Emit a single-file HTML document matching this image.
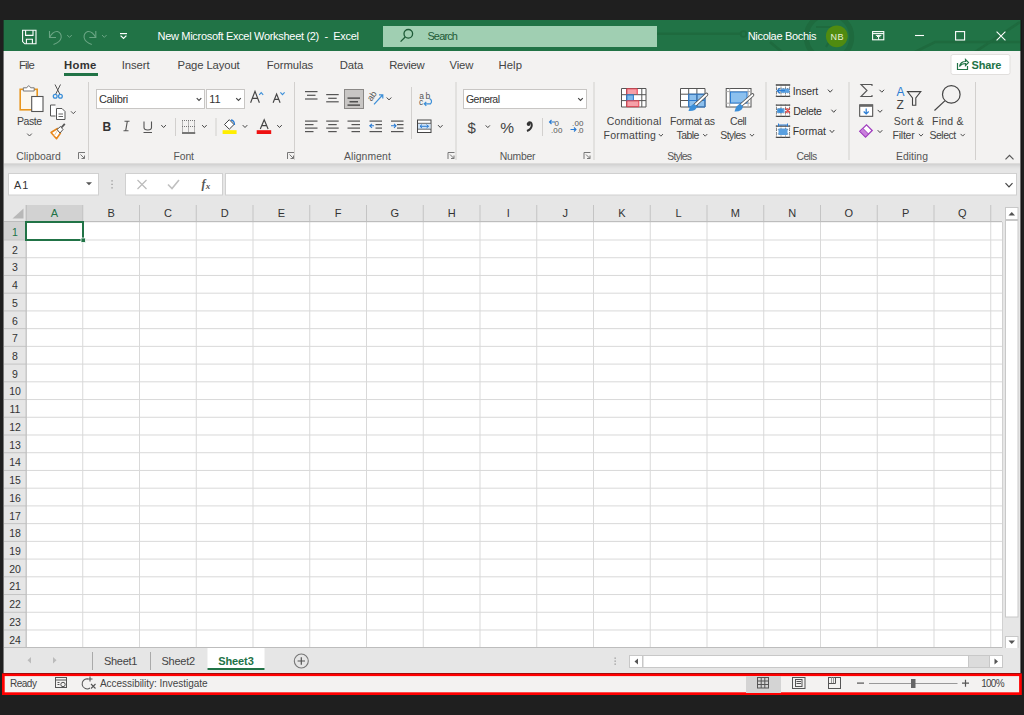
<!DOCTYPE html>
<html><head><meta charset="utf-8">
<style>
*{box-sizing:border-box;margin:0;padding:0}
html,body{width:1024px;height:715px;overflow:hidden;background:#1f1f1f;font-family:"Liberation Sans",sans-serif;position:relative}
svg{position:absolute;left:0;top:0}
.t{position:absolute;white-space:nowrap;line-height:1}
</style></head><body>
<svg width="1024" height="715" viewBox="0 0 1024 715">
<rect x="0" y="0" width="1024" height="715" fill="#1f1f1f" />
<rect x="4" y="20" width="1016" height="31" fill="#217346" />
<rect x="4" y="51" width="1016" height="112" fill="#f3f2f1" />
<rect x="4" y="163" width="1016" height="1" fill="#dddcdb" />
<rect x="4" y="164" width="1016" height="1" fill="#d3d3d3" />
<rect x="4" y="165" width="1016" height="1" fill="#d8d8d8" />
<rect x="4" y="166" width="1016" height="1" fill="#dddddd" />
<rect x="4" y="167" width="1016" height="1" fill="#e1e1e1" />
<rect x="4" y="168" width="1016" height="1" fill="#e4e4e4" />
<rect x="4" y="169" width="1016" height="36" fill="#e6e6e6" />
<rect x="4" y="205" width="1016" height="468" fill="#e6e6e6" />
<defs><clipPath id="tb"><rect x="4" y="20" width="1016" height="31"/></clipPath></defs><g stroke="#1e6a3e" stroke-width="2.6" fill="none" clip-path="url(#tb)"><path d="M657 33.8 H740.5"/><circle cx="743.5" cy="34" r="2.8" stroke-width="1.8"/><path d="M770 42 L782 52"/><circle cx="829" cy="37" r="22.7" stroke-width="5"/><path d="M816 27 H838 L826 47" stroke-width="2.2"/><path d="M915 52 L935 42 H1020"/><path d="M975 52 L1020 22"/></g>
<g stroke="#fff" stroke-width="1.1" fill="none"><path d="M22.6 30.3 H36 V43.8 H24.8 L22.6 41.6 Z"/><path d="M25.6 30.3 V35.4 H33 V30.3"/><path d="M26.4 43.8 V39.2 H32.4 V43.8"/></g>
<g stroke="#6aa584" stroke-width="1.1" fill="none"><path d="M49.5 31 V37.5 H56"/><path d="M49.5 37.5 Q53 31 57.5 31.5 Q61.5 33 61.2 37.5 Q60.5 42 53.5 44.5"/><path d="M95.8 31 V37.5 H89.3"/><path d="M95.8 37.5 Q92.3 31 87.8 31.5 Q83.8 33 84.1 37.5 Q84.8 42 91.8 44.5"/></g>
<path d="M67.2 35.0 L69.5 37.400000000000006 L71.8 35.0" stroke="#6aa584" stroke-width="1" fill="none"/>
<path d="M102.0 35.0 L104.3 37.400000000000006 L106.6 35.0" stroke="#6aa584" stroke-width="1" fill="none"/>
<g stroke="#fff" stroke-width="1.2" fill="none"><path d="M120 33.6 H127"/><path d="M120.6 35.6 L123.5 38.5 L126.4 35.6"/></g>
<rect x="383" y="26" width="274" height="21" fill="#a0cfb2" />
<g stroke="#1e5b37" stroke-width="1.3" fill="none"><circle cx="408.3" cy="33.8" r="4.3"/><path d="M405.2 37 L400.6 41.6"/></g>
<circle cx="836.8" cy="36.3" r="10.9" fill="#508b10"/>
<g stroke="#fff" stroke-width="1.1" fill="none"><rect x="872.6" y="31.6" width="11.2" height="8.2"/><path d="M872.6 33.6 H883.8"/><path d="M875.8 35.4 H881.4 M878.6 35.4 V39.8 M876.8 37.2 L878.6 35.4 L880.4 37.2" stroke-width="1"/></g>
<path d="M915 35.5 H924" stroke="#fff" stroke-width="1.1"/>
<rect x="955.6" y="31.6" width="9" height="8.4" stroke="#fff" stroke-width="1.1" fill="none"/>
<path d="M996.6 31.6 L1005.4 40.4 M1005.4 31.6 L996.6 40.4" stroke="#fff" stroke-width="1.1"/>
<rect x="64" y="73" width="34" height="3" fill="#217346" />
<rect x="951" y="54.5" width="59" height="20" rx="2" fill="#fff" stroke="#e1dfdd"/>
<g stroke="#217346" stroke-width="1.2" fill="none"><path d="M957.5 63 V69.5 H967.5 V66"/><path d="M959.5 66.5 Q960.5 61.5 965.5 61.5 V59.5 L968.5 62.5 L965.5 65.5 V63.5 Q961.5 63.5 959.5 66.5Z"/></g>
<rect x="88" y="82" width="1" height="78" fill="#d2d0ce" />
<rect x="294" y="82" width="1" height="78" fill="#d2d0ce" />
<rect x="455.5" y="82" width="1" height="78" fill="#d2d0ce" />
<rect x="593.5" y="82" width="1" height="78" fill="#d2d0ce" />
<rect x="765.5" y="82" width="1" height="78" fill="#d2d0ce" />
<rect x="848.5" y="82" width="1" height="78" fill="#d2d0ce" />
<rect x="975" y="82" width="1" height="78" fill="#d2d0ce" />
<rect x="175" y="118" width="1" height="18" fill="#d2d0ce" />
<rect x="215.5" y="118" width="1" height="18" fill="#d2d0ce" />
<rect x="411" y="87" width="1" height="52" fill="#d2d0ce" />
<rect x="542" y="118" width="1" height="18" fill="#d2d0ce" />
<g stroke="#777" stroke-width="1" fill="none"><path d="M78.5 159 V152.5 H85"/><path d="M80.5 154.5 L84.5 158.5 M84.5 155.5 V158.5 H81.5"/></g>
<g stroke="#777" stroke-width="1" fill="none"><path d="M287.5 159 V152.5 H294"/><path d="M289.5 154.5 L293.5 158.5 M293.5 155.5 V158.5 H290.5"/></g>
<g stroke="#777" stroke-width="1" fill="none"><path d="M448.0 159 V152.5 H454.5"/><path d="M450.0 154.5 L454.0 158.5 M454.0 155.5 V158.5 H451.0"/></g>
<g stroke="#777" stroke-width="1" fill="none"><path d="M584.0 159 V152.5 H590.5"/><path d="M586.0 154.5 L590.0 158.5 M590.0 155.5 V158.5 H587.0"/></g>
<path d="M1005.5 159.3 L1009.5 155.3 L1013.5 159.3" stroke="#555" stroke-width="1.2" fill="none"/>
<rect x="20.2" y="89.3" width="17" height="20.5" fill="#fbf7ee" stroke="#e8961e" stroke-width="1.6"/><path d="M23.3 91 V87.8 H26.8 Q28.7 83.8 30.6 87.8 H34.2 V91 Z" fill="#fff" stroke="#777" stroke-width="1"/><rect x="31.7" y="96.5" width="11.3" height="15" fill="#fff" stroke="#555" stroke-width="1.1"/>
<path d="M27.2 133.60000000000002 L29.5 136.0 L31.8 133.60000000000002" stroke="#555" stroke-width="1" fill="none"/>
<path d="M55 84.5 L60 94.5 M60.5 84.5 L55.5 94.5" stroke="#555" stroke-width="1" fill="none"/><circle cx="55.2" cy="96.2" r="1.9" fill="none" stroke="#3c8fd8" stroke-width="1.3"/><circle cx="60.4" cy="96.2" r="1.9" fill="none" stroke="#3c8fd8" stroke-width="1.3"/>
<g stroke="#555" stroke-width="1" fill="#fff"><path d="M55.5 105 H50.5 V116 H55.5"/><path d="M56.5 108.5 H62 L65 111.5 V119.5 H56.5Z"/><path d="M58.5 114 H63 M58.5 116.5 H63" stroke-width="0.9"/></g>
<path d="M71.0 111.3 L73.3 113.7 L75.6 111.3" stroke="#555" stroke-width="1" fill="none"/>
<path d="M51 132.5 L57.5 128.5 L60.5 133 L56.5 138.8 Z" fill="#fff" stroke="#e8861a" stroke-width="1.5" stroke-linejoin="round"/><path d="M54 136 L57.5 130.5" stroke="#f5c58a" stroke-width="1"/><path d="M57 129.5 L60.5 126.5 L63 129.5 L60 133Z" fill="#fff" stroke="#555" stroke-width="1"/><path d="M61.5 127.5 L64.8 123.8" stroke="#555" stroke-width="1.8"/>
<rect x="96.5" y="89.5" width="108" height="19" fill="#fff" stroke="#c8c6c4"/>
<path d="M196.7 98.1 L199 100.5 L201.3 98.1" stroke="#444" stroke-width="1.1" fill="none"/>
<rect x="206.5" y="89.5" width="38" height="19" fill="#fff" stroke="#c8c6c4"/>
<path d="M236.2 98.1 L238.5 100.5 L240.8 98.1" stroke="#444" stroke-width="1.1" fill="none"/>
<path d="M250.6 102.8 L255 91.4 L259.4 102.8 M252.3 98.4 H257.7" stroke="#444" stroke-width="1.15" fill="none"/>
<path d="M259.2 94.8 L261.2 92.6 L263.2 94.8" stroke="#3c8fd8" stroke-width="1.1" fill="none"/>
<path d="M273.1 102.8 L276.6 94 L280.1 102.8 M274.5 99.4 H278.7" stroke="#444" stroke-width="1.15" fill="none"/>
<path d="M280.4 92.3 L282.5 94.6 L284.6 92.3" stroke="#3c8fd8" stroke-width="1.1" fill="none"/>
<path d="M124.5 121.3 H129.5 M123.5 130.7 H128.5 M127.3 121.3 L125.7 130.7" stroke="#555" stroke-width="1.1" fill="none"/>
<path d="M144 121.5 V127.5 Q144 130 147.8 130 Q151.5 130 151.5 127.5 V121.5" stroke="#555" stroke-width="1.1" fill="none"/>
<rect x="143.5" y="132" width="8.5" height="1" fill="#555" />
<path d="M161.29999999999998 125.1 L163.6 127.5 L165.9 125.1" stroke="#444" stroke-width="1" fill="none"/>
<g stroke="#777" stroke-width="1" fill="none" stroke-dasharray="1 1"><path d="M182 120.5 H195 M182 126.5 H195 M182.5 120.5 V132 M188.5 120.5 V132 M194.5 120.5 V132"/></g><path d="M182 133 H195.2" stroke="#333" stroke-width="1.3"/>
<path d="M202.1 125.1 L204.4 127.5 L206.70000000000002 125.1" stroke="#444" stroke-width="1" fill="none"/>
<path d="M224.5 124.5 L229.3 119.7 L234 124.5 L229.3 129.2Z" fill="#fff" stroke="#444" stroke-width="1"/><path d="M231 120 Q234.5 120.5 234.5 125" stroke="#2b7cd3" stroke-width="1.3" fill="none"/>
<rect x="222.6" y="130.2" width="14" height="3.8" fill="#ffee00" />
<path d="M242.7 125.1 L245 127.5 L247.3 125.1" stroke="#444" stroke-width="1" fill="none"/>
<path d="M260.3 129 L264.2 119.8 L268.1 129 M261.8 125.6 H266.6" stroke="#444" stroke-width="1.15" fill="none"/>
<rect x="256.7" y="130.2" width="14.5" height="3.8" fill="#ee1111" />
<path d="M277.2 125.1 L279.5 127.5 L281.8 125.1" stroke="#444" stroke-width="1" fill="none"/>
<rect x="305" y="91" width="12.5" height="1.2" fill="#555" />
<rect x="307" y="94.7" width="8.5" height="1.2" fill="#555" />
<rect x="305" y="98.4" width="12.5" height="1.2" fill="#555" />
<rect x="326.2" y="94" width="12.5" height="1.2" fill="#555" />
<rect x="328.2" y="97.7" width="8.5" height="1.2" fill="#555" />
<rect x="326.2" y="101.2" width="12.5" height="1.2" fill="#555" />
<rect x="344.5" y="89.5" width="19" height="19" fill="#c8c6c4" stroke="#8a8886"/>
<rect x="347.5" y="97.5" width="12.5" height="1.2" fill="#333" />
<rect x="349.5" y="101.2" width="8.5" height="1.2" fill="#333" />
<rect x="347.5" y="104.5" width="12.5" height="1.2" fill="#333" />
<g><text x="0" y="0" font-size="9" fill="#555" font-family="Liberation Sans" transform="translate(371.5 101.8) rotate(-55)">ab</text><path d="M374 104.3 L382.6 95 M379 94.8 H382.8 V98.6" stroke="#3c8fd8" stroke-width="1.2" fill="none"/></g>
<path d="M386.7 97.5 L389 99.9 L391.3 97.5" stroke="#444" stroke-width="1" fill="none"/>
<path d="M429.5 98.5 Q433 100.5 430.5 103.8 H424.5 M426.3 101.8 L424.3 103.8 L426.3 105.8" stroke="#3c8fd8" stroke-width="1.2" fill="none"/>
<rect x="305" y="120.5" width="12.5" height="1.2" fill="#555" />
<rect x="305" y="124" width="8.5" height="1.2" fill="#555" />
<rect x="305" y="127.5" width="12.5" height="1.2" fill="#555" />
<rect x="305" y="131" width="8.5" height="1.2" fill="#555" />
<rect x="326.2" y="120.5" width="12.5" height="1.2" fill="#555" />
<rect x="328.2" y="124" width="8.5" height="1.2" fill="#555" />
<rect x="326.2" y="127.5" width="12.5" height="1.2" fill="#555" />
<rect x="328.2" y="131" width="8.5" height="1.2" fill="#555" />
<rect x="347.5" y="120.5" width="12.5" height="1.2" fill="#555" />
<rect x="351.5" y="124" width="8.5" height="1.2" fill="#555" />
<rect x="347.5" y="127.5" width="12.5" height="1.2" fill="#555" />
<rect x="351.5" y="131" width="8.5" height="1.2" fill="#555" />
<rect x="369.5" y="120.5" width="12.5" height="1.2" fill="#555" />
<rect x="375.5" y="124" width="6.5" height="1.2" fill="#555" />
<rect x="375.5" y="127.5" width="6.5" height="1.2" fill="#555" />
<rect x="369.5" y="131" width="12.5" height="1.2" fill="#555" />
<path d="M374 125.8 H369.8 M372 123.8 L369.8 125.8 L372 127.8" stroke="#2b7cd3" stroke-width="1.1" fill="none"/>
<rect x="391" y="120.5" width="12.5" height="1.2" fill="#555" />
<rect x="397" y="124" width="6.5" height="1.2" fill="#555" />
<rect x="397" y="127.5" width="6.5" height="1.2" fill="#555" />
<rect x="391" y="131" width="12.5" height="1.2" fill="#555" />
<path d="M391 125.8 H396 M394 123.8 L396 125.8 L394 127.8" stroke="#2b7cd3" stroke-width="1.1" fill="none"/>
<rect x="417.5" y="120" width="13.5" height="12.5" fill="#fff" stroke="#444" stroke-width="1"/><rect x="418" y="123.5" width="12.5" height="5.5" fill="#cfe3f7"/><path d="M417.5 123.3 H431 M417.5 129.2 H431" stroke="#444" stroke-width="0.8"/><path d="M420 126.3 H428.5 M422 124.6 L420 126.3 L422 128 M426.5 124.6 L428.5 126.3 L426.5 128" stroke="#2b7cd3" stroke-width="1" fill="none"/>
<path d="M438.0 125.1 L440.3 127.5 L442.6 125.1" stroke="#444" stroke-width="1" fill="none"/>
<rect x="463.5" y="89.5" width="123" height="19" fill="#fff" stroke="#c8c6c4"/>
<path d="M578.2 98.1 L580.5 100.5 L582.8 98.1" stroke="#444" stroke-width="1.1" fill="none"/>
<path d="M485.7 125.4 L487.8 127.6 L489.90000000000003 125.4" stroke="#444" stroke-width="1" fill="none"/>
<path d="M528.5 122.5 Q531.5 121.5 531.8 125 Q531.8 129 527 131" stroke="#333" stroke-width="2" fill="none"/><circle cx="528.6" cy="124" r="1.9" fill="#333"/>
<path d="M555 122 H549.5 M551.5 120 L549.5 122 L551.5 124" stroke="#2b7cd3" stroke-width="1.1" fill="none"/>
<path d="M570.5 129.5 H576 M574 127.5 L576 129.5 L574 131.5" stroke="#2b7cd3" stroke-width="1.1" fill="none"/>
<g><rect x="621.5" y="88.5" width="24.5" height="18.5" fill="#fff"/><rect x="627" y="89" width="10.5" height="5.5" fill="#f5a0a8"/><rect x="627" y="100.8" width="11.8" height="5.8" fill="#f5a0a8"/><rect x="627" y="94.8" width="6.5" height="5.6" fill="#7ab8ec"/><path d="M621.5 88.5 H646 V107 H621.5Z M621.5 94.7 H646 M621.5 100.6 H646 M626.6 88.5 V107 M641.8 88.5 V107" stroke="#555" stroke-width="1" fill="none"/><path d="M626.8 88.8 H637.2 V94.6 M626.8 88.8 V94.6" stroke="#e84050" stroke-width="1" fill="none"/><path d="M626.8 94.8 H633.4 V100.5 H626.8Z" stroke="#2b7cd3" stroke-width="1" fill="none"/><path d="M626.8 100.8 H638.8 V106.7 H626.8Z" stroke="#e84050" stroke-width="1" fill="none"/></g>
<path d="M658.8 134.0 L660.9 136.2 L663.0 134.0" stroke="#555" stroke-width="1" fill="none"/>
<g><rect x="680.5" y="88.5" width="24.5" height="18.5" fill="#fff"/><rect x="688.7" y="94.2" width="16.3" height="12.8" fill="#8cc0ee"/><path d="M680.5 88.5 H705 V107 H680.5Z M680.5 94.2 H705 M680.5 100.5 H705 M688.7 88.5 V107 M696.9 88.5 V107" stroke="#555" stroke-width="1" fill="none"/><path d="M688.7 94.2 H705 V107 H688.7Z M688.7 100.5 H705 M696.9 94.2 V107" stroke="#2b7cd3" stroke-width="1" fill="none"/><path d="M706.5 94.5 L694 106" stroke="#555" stroke-width="3.6" stroke-linecap="round"/><path d="M706.5 94.5 L694 106" stroke="#fff" stroke-width="1.8" stroke-linecap="round"/><path d="M694.5 104 Q690 104.5 688.5 111 Q696 111.5 697 106.5Z" fill="#3c8fd8"/></g>
<path d="M703.1 134.0 L705.2 136.2 L707.3000000000001 134.0" stroke="#555" stroke-width="1" fill="none"/>
<g><rect x="726.2" y="88.5" width="24.8" height="18.5" fill="#fff" stroke="#555" stroke-width="1"/><path d="M726.2 91.6 H751 M726.2 103.2 H751 M729.7 88.5 V107 M748.1 88.5 V107" stroke="#aaa" stroke-width="1"/><rect x="730.5" y="92" width="16.5" height="11" fill="#8cc0ee" stroke="#2b7cd3" stroke-width="1"/><path d="M752.5 95 L740 106" stroke="#555" stroke-width="3.6" stroke-linecap="round"/><path d="M752.5 95 L740 106" stroke="#fff" stroke-width="1.8" stroke-linecap="round"/><path d="M740.5 104 Q736 104.5 734.5 111.5 Q742 112 743 106.5Z" fill="#3c8fd8"/></g>
<path d="M749.9 134.0 L752 136.2 L754.1 134.0" stroke="#555" stroke-width="1" fill="none"/>
<rect x="776" y="84.4" width="14" height="12.5" fill="#fff"/>
<path d="M775.8 85.0 H790.2 M775.8 96.30000000000001 H790.2" stroke="#444" stroke-width="1.3"/>
<path d="M776.5 84.4 V96.9 M789.5 84.4 V96.9 M781 84.4 V96.9 M785.5 84.4 V96.9 M776 88.56666666666668 H790 M776 92.73333333333333 H790" stroke="#666" stroke-width="0.9" stroke-dasharray="1.2 1"/>
<rect x="781" y="88.6" width="8.5" height="4.2" fill="#5aa0e0" />
<path d="M785 90.7 H777.5 M780 88.2 L777.3 90.7 L780 93.2" stroke="#2b7cd3" stroke-width="1.3" fill="none"/>
<path d="M827.9000000000001 89.60000000000001 L830.2 92.2 L832.5 89.60000000000001" stroke="#444" stroke-width="1" fill="none"/>
<rect x="776" y="104.5" width="14" height="12.5" fill="#fff"/>
<path d="M775.8 105.1 H790.2 M775.8 116.4 H790.2" stroke="#444" stroke-width="1.3"/>
<path d="M776.5 104.5 V117.0 M789.5 104.5 V117.0 M781 104.5 V117.0 M785.5 104.5 V117.0 M776 108.66666666666667 H790 M776 112.83333333333333 H790" stroke="#666" stroke-width="0.9" stroke-dasharray="1.2 1"/>
<rect x="777" y="108.6" width="7.5" height="4.2" fill="#5aa0e0" />
<circle cx="780.5" cy="110.7" r="2.4" fill="#3c8fd8"/>
<path d="M785.5 108.2 L789.8 113.2 M789.8 108.2 L785.5 113.2" stroke="#e84040" stroke-width="1.3"/>
<path d="M831.4000000000001 109.7 L833.7 112.3 L836.0 109.7" stroke="#444" stroke-width="1" fill="none"/>
<rect x="776" y="125.5" width="14" height="12.5" fill="#fff"/>
<path d="M775.8 126.1 H790.2 M775.8 137.4 H790.2" stroke="#444" stroke-width="1.3"/>
<path d="M776.5 125.5 V138.0 M789.5 125.5 V138.0 M781 125.5 V138.0 M785.5 125.5 V138.0 M776 129.66666666666666 H790 M776 133.83333333333334 H790" stroke="#666" stroke-width="0.9" stroke-dasharray="1.2 1"/>
<rect x="778.5" y="128.5" width="9" height="6.5" fill="#5aa0e0" />
<path d="M778.5 125 H787.5 M778.5 123.5 V126.5 M787.5 123.5 V126.5" stroke="#2b7cd3" stroke-width="1"/>
<path d="M829.7 130.0 L832 132.60000000000002 L834.3 130.0" stroke="#444" stroke-width="1" fill="none"/>
<path d="M872 86 V84.5 H861 L867 90.5 L861 96.5 H872 V95" stroke="#555" stroke-width="1.1" fill="none"/>
<path d="M879.5 89.8 L881.8 92.2 L884.0999999999999 89.8" stroke="#444" stroke-width="1" fill="none"/>
<rect x="859.7" y="104.8" width="13" height="11.5" fill="#fff" stroke="#444" stroke-width="1"/><rect x="859.7" y="104.8" width="13" height="2" fill="#666"/><path d="M866.2 108.5 V114 M863.7 111.5 L866.2 114 L868.7 111.5" stroke="#2b7cd3" stroke-width="1.2" fill="none"/>
<path d="M877.7 109.89999999999999 L880 112.3 L882.3 109.89999999999999" stroke="#444" stroke-width="1" fill="none"/>
<path d="M859.8 131.3 L866.5 124.8 L872.2 130.5 L865.5 137Z" fill="#fff" stroke="#a13fbf" stroke-width="1.3"/><path d="M859.8 131.3 L862.8 128.3 L868.5 134 L865.5 137Z" fill="#c97fdc" stroke="#a13fbf" stroke-width="1"/>
<path d="M877.7 130.20000000000002 L880 132.6 L882.3 130.20000000000002" stroke="#444" stroke-width="1" fill="none"/>
<path d="M907.5 91.6 H920.8 L915.8 98 V105.3 H912.5 V98 Z" fill="none" stroke="#444" stroke-width="1.1"/>
<path d="M918.9 133.9 L921 136.1 L923.1 133.9" stroke="#555" stroke-width="1" fill="none"/>
<circle cx="951.3" cy="94.4" r="8.8" fill="none" stroke="#444" stroke-width="1.2"/><path d="M944.8 100.9 L934.5 110.5" stroke="#444" stroke-width="1.2"/>
<path d="M960.6 133.9 L962.7 136.1 L964.8000000000001 133.9" stroke="#555" stroke-width="1" fill="none"/>
<rect x="8.5" y="173.5" width="90" height="21.5" fill="#fff" stroke="#d0d0d0"/>
<path d="M86 182.3 H92 L89 185.3Z" fill="#555"/>
<rect x="111.4" y="180.2" width="1.3" height="1.3" fill="#999" />
<rect x="111.4" y="183.7" width="1.3" height="1.3" fill="#999" />
<rect x="111.4" y="187.2" width="1.3" height="1.3" fill="#999" />
<rect x="125.5" y="173.5" width="97" height="21.5" fill="#fff" stroke="#d0d0d0"/>
<path d="M137.5 180 L146.5 189 M146.5 180 L137.5 189" stroke="#bbb" stroke-width="1.2"/>
<path d="M168 184.5 L172 188.5 L179 180" stroke="#c0c0c0" stroke-width="1.6" fill="none"/>
<rect x="225.5" y="173.5" width="791" height="21.5" fill="#fff" stroke="#d0d0d0"/>
<path d="M1005.5 183.2 L1009 186.8 L1012.5 183.2" stroke="#444" stroke-width="1.2" fill="none"/>
<rect x="26" y="222" width="976" height="426" fill="#fff" />
<rect x="82.25" y="222" width="1" height="426" fill="#d9d9d9" />
<rect x="139.00" y="222" width="1" height="426" fill="#d9d9d9" />
<rect x="195.75" y="222" width="1" height="426" fill="#d9d9d9" />
<rect x="252.50" y="222" width="1" height="426" fill="#d9d9d9" />
<rect x="309.25" y="222" width="1" height="426" fill="#d9d9d9" />
<rect x="366.00" y="222" width="1" height="426" fill="#d9d9d9" />
<rect x="422.75" y="222" width="1" height="426" fill="#d9d9d9" />
<rect x="479.50" y="222" width="1" height="426" fill="#d9d9d9" />
<rect x="536.25" y="222" width="1" height="426" fill="#d9d9d9" />
<rect x="593.00" y="222" width="1" height="426" fill="#d9d9d9" />
<rect x="649.75" y="222" width="1" height="426" fill="#d9d9d9" />
<rect x="706.50" y="222" width="1" height="426" fill="#d9d9d9" />
<rect x="763.25" y="222" width="1" height="426" fill="#d9d9d9" />
<rect x="820.00" y="222" width="1" height="426" fill="#d9d9d9" />
<rect x="876.75" y="222" width="1" height="426" fill="#d9d9d9" />
<rect x="933.50" y="222" width="1" height="426" fill="#d9d9d9" />
<rect x="990.25" y="222" width="1" height="426" fill="#d9d9d9" />
<rect x="26" y="239.50" width="976" height="1" fill="#d9d9d9" />
<rect x="26" y="257.22" width="976" height="1" fill="#d9d9d9" />
<rect x="26" y="274.95" width="976" height="1" fill="#d9d9d9" />
<rect x="26" y="292.68" width="976" height="1" fill="#d9d9d9" />
<rect x="26" y="310.41" width="976" height="1" fill="#d9d9d9" />
<rect x="26" y="328.13" width="976" height="1" fill="#d9d9d9" />
<rect x="26" y="345.86" width="976" height="1" fill="#d9d9d9" />
<rect x="26" y="363.59" width="976" height="1" fill="#d9d9d9" />
<rect x="26" y="381.31" width="976" height="1" fill="#d9d9d9" />
<rect x="26" y="399.04" width="976" height="1" fill="#d9d9d9" />
<rect x="26" y="416.77" width="976" height="1" fill="#d9d9d9" />
<rect x="26" y="434.49" width="976" height="1" fill="#d9d9d9" />
<rect x="26" y="452.22" width="976" height="1" fill="#d9d9d9" />
<rect x="26" y="469.95" width="976" height="1" fill="#d9d9d9" />
<rect x="26" y="487.68" width="976" height="1" fill="#d9d9d9" />
<rect x="26" y="505.40" width="976" height="1" fill="#d9d9d9" />
<rect x="26" y="523.13" width="976" height="1" fill="#d9d9d9" />
<rect x="26" y="540.86" width="976" height="1" fill="#d9d9d9" />
<rect x="26" y="558.58" width="976" height="1" fill="#d9d9d9" />
<rect x="26" y="576.31" width="976" height="1" fill="#d9d9d9" />
<rect x="26" y="594.04" width="976" height="1" fill="#d9d9d9" />
<rect x="26" y="611.76" width="976" height="1" fill="#d9d9d9" />
<rect x="26" y="629.49" width="976" height="1" fill="#d9d9d9" />
<rect x="26" y="205" width="976" height="17" fill="#e6e6e6" />
<rect x="26" y="205" width="57" height="17" fill="#d2d2d2" />
<rect x="82.25" y="205" width="1" height="17" fill="#c4c4c4" />
<rect x="139.00" y="205" width="1" height="17" fill="#c4c4c4" />
<rect x="195.75" y="205" width="1" height="17" fill="#c4c4c4" />
<rect x="252.50" y="205" width="1" height="17" fill="#c4c4c4" />
<rect x="309.25" y="205" width="1" height="17" fill="#c4c4c4" />
<rect x="366.00" y="205" width="1" height="17" fill="#c4c4c4" />
<rect x="422.75" y="205" width="1" height="17" fill="#c4c4c4" />
<rect x="479.50" y="205" width="1" height="17" fill="#c4c4c4" />
<rect x="536.25" y="205" width="1" height="17" fill="#c4c4c4" />
<rect x="593.00" y="205" width="1" height="17" fill="#c4c4c4" />
<rect x="649.75" y="205" width="1" height="17" fill="#c4c4c4" />
<rect x="706.50" y="205" width="1" height="17" fill="#c4c4c4" />
<rect x="763.25" y="205" width="1" height="17" fill="#c4c4c4" />
<rect x="820.00" y="205" width="1" height="17" fill="#c4c4c4" />
<rect x="876.75" y="205" width="1" height="17" fill="#c4c4c4" />
<rect x="933.50" y="205" width="1" height="17" fill="#c4c4c4" />
<rect x="990.25" y="205" width="1" height="17" fill="#c4c4c4" />
<rect x="4" y="221" width="998" height="1.2" fill="#bdbdbd" />
<rect x="4" y="222" width="22" height="426" fill="#e6e6e6" />
<rect x="4" y="222" width="22" height="18" fill="#d2d2d2" />
<rect x="4" y="239.50" width="22" height="1" fill="#c4c4c4" />
<rect x="4" y="257.22" width="22" height="1" fill="#c4c4c4" />
<rect x="4" y="274.95" width="22" height="1" fill="#c4c4c4" />
<rect x="4" y="292.68" width="22" height="1" fill="#c4c4c4" />
<rect x="4" y="310.41" width="22" height="1" fill="#c4c4c4" />
<rect x="4" y="328.13" width="22" height="1" fill="#c4c4c4" />
<rect x="4" y="345.86" width="22" height="1" fill="#c4c4c4" />
<rect x="4" y="363.59" width="22" height="1" fill="#c4c4c4" />
<rect x="4" y="381.31" width="22" height="1" fill="#c4c4c4" />
<rect x="4" y="399.04" width="22" height="1" fill="#c4c4c4" />
<rect x="4" y="416.77" width="22" height="1" fill="#c4c4c4" />
<rect x="4" y="434.49" width="22" height="1" fill="#c4c4c4" />
<rect x="4" y="452.22" width="22" height="1" fill="#c4c4c4" />
<rect x="4" y="469.95" width="22" height="1" fill="#c4c4c4" />
<rect x="4" y="487.68" width="22" height="1" fill="#c4c4c4" />
<rect x="4" y="505.40" width="22" height="1" fill="#c4c4c4" />
<rect x="4" y="523.13" width="22" height="1" fill="#c4c4c4" />
<rect x="4" y="540.86" width="22" height="1" fill="#c4c4c4" />
<rect x="4" y="558.58" width="22" height="1" fill="#c4c4c4" />
<rect x="4" y="576.31" width="22" height="1" fill="#c4c4c4" />
<rect x="4" y="594.04" width="22" height="1" fill="#c4c4c4" />
<rect x="4" y="611.76" width="22" height="1" fill="#c4c4c4" />
<rect x="4" y="629.49" width="22" height="1" fill="#c4c4c4" />
<rect x="4" y="647.22" width="22" height="1" fill="#c4c4c4" />
<rect x="25.6" y="205" width="1.2" height="443" fill="#bdbdbd" />
<rect x="1002" y="222" width="1" height="426" fill="#bdbdbd" />
<rect x="4" y="647" width="998" height="1" fill="#bdbdbd" />
<path d="M12.5 218.5 H23.5 V208.5Z" fill="#b8b8b8"/>
<rect x="26" y="222" width="57" height="18" fill="none" stroke="#217346" stroke-width="2"/>
<rect x="81" y="238" width="4.5" height="4.5" fill="#217346" stroke="#fff" stroke-width="0.8"/>
<rect x="1002.5" y="205" width="17.5" height="443" fill="#e6e6e6" />
<rect x="1005.5" y="207.5" width="12.5" height="12" fill="#fff" stroke="#c8c8c8"/><path d="M1008.5 215.5 L1011.75 212 L1015 215.5Z" fill="#555"/>
<rect x="1005.5" y="220.5" width="12.5" height="396.5" fill="#fff" stroke="#c8c8c8"/>
<rect x="1005.5" y="636.5" width="12.5" height="12" fill="#fff" stroke="#c8c8c8"/><path d="M1008.5 640.5 L1011.75 644 L1015 640.5Z" fill="#555"/>
<rect x="4" y="648" width="1016" height="25" fill="#e6e6e6" />
<path d="M31 657 V663.5 L27.5 660.25Z" fill="#bbb"/><path d="M53 657 V663.5 L56.5 660.25Z" fill="#bbb"/>
<rect x="92" y="652" width="1" height="18" fill="#aaa" />
<rect x="150" y="652" width="1" height="18" fill="#aaa" />
<rect x="207.5" y="648" width="57" height="22" fill="#fff" />
<rect x="207.5" y="668" width="57" height="2" fill="#217346" />
<circle cx="301.3" cy="661" r="7" fill="none" stroke="#777" stroke-width="1.1"/><path d="M301.3 657.3 V664.7 M297.6 661 H305" stroke="#555" stroke-width="1.2"/>
<rect x="614.5" y="657.5" width="1.3" height="1.3" fill="#999" />
<rect x="614.5" y="660.5" width="1.3" height="1.3" fill="#999" />
<rect x="614.5" y="663.5" width="1.3" height="1.3" fill="#999" />
<rect x="629.5" y="655.5" width="373" height="12" fill="#dcdcdc" stroke="#c8c8c8"/>
<rect x="629.5" y="655.5" width="13" height="12" fill="#fff" stroke="#c8c8c8"/><path d="M638 658.5 V664.5 L634.5 661.5Z" fill="#555"/>
<rect x="643" y="655.5" width="325.5" height="12" fill="#fff" stroke="#c8c8c8"/>
<rect x="989.5" y="655.5" width="13" height="12" fill="#fff" stroke="#c8c8c8"/><path d="M994.5 658.5 V664.5 L998 661.5Z" fill="#555"/>
<rect x="3.35" y="674.75" width="1017.1" height="18.9" fill="#f3f2f1" stroke="#ff0000" stroke-width="2.7"/>
<g stroke="#555" stroke-width="1" fill="none"><rect x="55.5" y="677.5" width="11" height="10"/><path d="M55.5 680 H66.5"/><path d="M57.5 682.5 H59.5 M57.5 684.5 H59.5"/><circle cx="63" cy="684.5" r="2.2"/></g>
<g stroke="#555" stroke-width="1.1" fill="none"><path d="M88 679 A5 5 0 1 0 90 688"/><path d="M90 676.5 V681.5 M87.5 679 H92.5"/><path d="M91 684 L95.5 688.5 M95.5 684 L91 688.5"/></g>
<rect x="746" y="676" width="35" height="17" fill="#d4d4d4" />
<g stroke="#555" stroke-width="1" fill="none"><rect x="757.5" y="677.5" width="11" height="10.5"/><path d="M761.2 677.5 V688 M764.8 677.5 V688 M757.5 681 H768.5 M757.5 684.5 H768.5"/></g>
<g stroke="#555" stroke-width="1" fill="none"><rect x="792.5" y="677.5" width="12.5" height="11"/><rect x="795.5" y="679.5" width="6.5" height="7"/><path d="M796.5 681.5 H801 M796.5 683.5 H801"/></g>
<g stroke="#555" stroke-width="1" fill="none"><rect x="828.5" y="677.5" width="12" height="11"/><path d="M828.5 683.5 H835.5 V677.5"/><path d="M831.5 677.5 V683 M833.5 677.5 V683" stroke="#999"/></g>
<rect x="857" y="682.5" width="7" height="1.2" fill="#555" />
<rect x="869" y="683" width="88.5" height="1" fill="#999" />
<rect x="911" y="679" width="4.5" height="9" fill="#666" />
<path d="M962 683.2 H969 M965.5 679.7 V686.7" stroke="#555" stroke-width="1.2"/>
<rect x="3" y="20" width="1" height="31" fill="#1c3f2c" />
<rect x="3" y="51" width="1" height="622" fill="#7a7a7a" />
<rect x="1020" y="51" width="1" height="622" fill="#707070" />
<rect x="1020" y="20" width="1" height="31" fill="#1c3f2c" />
<rect x="1021" y="20" width="1" height="653" fill="#171717" />
</svg>
<div class="t" style="left:157.50px;top:31px;font-size:11px;color:#fff;font-weight:400;letter-spacing:-0.306px;white-space:pre">New Microsoft Excel Worksheet (2)  -  Excel</div>
<div class="t" style="left:427.40px;top:31px;font-size:11px;color:#1e5b37;font-weight:400;letter-spacing:-0.854px;">Search</div>
<div class="t" style="left:747.70px;top:31px;font-size:11px;color:#fff;font-weight:400;letter-spacing:-0.305px;">Nicolae Bochis</div>
<div class="t" style="left:830.50px;top:33px;font-size:9px;color:#e8f0d8;font-weight:400;letter-spacing:0.490px;">NB</div>
<div class="t" style="left:18.90px;top:60px;font-size:11.3px;color:#444;font-weight:400;letter-spacing:-0.731px;">File</div>
<div class="t" style="left:121.70px;top:60px;font-size:11.3px;color:#444;font-weight:400;letter-spacing:-0.070px;">Insert</div>
<div class="t" style="left:177.50px;top:60px;font-size:11.3px;color:#444;font-weight:400;letter-spacing:-0.125px;">Page Layout</div>
<div class="t" style="left:266.80px;top:60px;font-size:11.3px;color:#444;font-weight:400;letter-spacing:-0.089px;">Formulas</div>
<div class="t" style="left:339.80px;top:60px;font-size:11.3px;color:#444;font-weight:400;letter-spacing:-0.100px;">Data</div>
<div class="t" style="left:389.30px;top:60px;font-size:11.3px;color:#444;font-weight:400;letter-spacing:-0.353px;">Review</div>
<div class="t" style="left:449.50px;top:60px;font-size:11.3px;color:#444;font-weight:400;letter-spacing:-0.165px;">View</div>
<div class="t" style="left:498.40px;top:60px;font-size:11.3px;color:#444;font-weight:400;letter-spacing:0.126px;">Help</div>
<div class="t" style="left:64.00px;top:60px;font-size:11.3px;color:#333;font-weight:700;letter-spacing:0.295px;">Home</div>
<div class="t" style="left:971.60px;top:60px;font-size:11px;color:#217346;font-weight:700;letter-spacing:-0.170px;">Share</div>
<div class="t" style="left:16.30px;top:152px;font-size:10.4px;color:#555;font-weight:400;letter-spacing:-0.002px;">Clipboard</div>
<div class="t" style="left:173.50px;top:152px;font-size:10.4px;color:#555;font-weight:400;letter-spacing:-0.100px;">Font</div>
<div class="t" style="left:344.00px;top:152px;font-size:10.4px;color:#555;font-weight:400;letter-spacing:0.072px;">Alignment</div>
<div class="t" style="left:499.80px;top:152px;font-size:10.4px;color:#555;font-weight:400;letter-spacing:-0.234px;">Number</div>
<div class="t" style="left:667.30px;top:152px;font-size:10.4px;color:#555;font-weight:400;letter-spacing:-0.728px;">Styles</div>
<div class="t" style="left:796.60px;top:152px;font-size:10.4px;color:#555;font-weight:400;letter-spacing:-0.635px;">Cells</div>
<div class="t" style="left:896.00px;top:152px;font-size:10.4px;color:#555;font-weight:400;letter-spacing:0.029px;">Editing</div>
<div class="t" style="left:17.00px;top:116px;font-size:10.5px;color:#444;font-weight:400;letter-spacing:-0.457px;">Paste</div>
<div class="t" style="left:98.90px;top:94px;font-size:11px;color:#333;font-weight:400;letter-spacing:-0.297px;">Calibri</div>
<div class="t" style="left:209.3px;top:94.00px;font-size:11px;color:#333;font-weight:400;">11</div>
<div class="t" style="left:102.60px;top:121px;font-size:12px;color:#333;font-weight:700;letter-spacing:0.000px;">B</div>
<div class="t" style="left:419.30px;top:92px;font-size:8.5px;color:#555;font-weight:400;letter-spacing:1.565px;">ab</div>
<div class="t" style="left:419px;top:98.00px;font-size:8.5px;color:#555;font-weight:400;">c</div>
<div class="t" style="left:466.00px;top:94px;font-size:10.5px;color:#333;font-weight:400;letter-spacing:-0.563px;">General</div>
<div class="t" style="left:467.6px;top:120.00px;font-size:15px;color:#444;font-weight:400;">$</div>
<div class="t" style="left:500.2px;top:120.00px;font-size:15.5px;color:#444;font-weight:400;">%</div>
<div class="t" style="left:554.50px;top:120px;font-size:8px;color:#555;font-weight:400;letter-spacing:0.000px;">0</div>
<div class="t" style="left:551.00px;top:127px;font-size:8px;color:#555;font-weight:400;letter-spacing:0.140px;">.00</div>
<div class="t" style="left:572.00px;top:120px;font-size:8px;color:#555;font-weight:400;letter-spacing:0.190px;">.00</div>
<div class="t" style="left:577.50px;top:127px;font-size:8px;color:#555;font-weight:400;letter-spacing:-0.680px;">.0</div>
<div class="t" style="left:606.70px;top:116px;font-size:10.5px;color:#444;font-weight:400;letter-spacing:0.205px;">Conditional</div>
<div class="t" style="left:603.50px;top:130px;font-size:10.5px;color:#444;font-weight:400;letter-spacing:0.234px;">Formatting</div>
<div class="t" style="left:670.00px;top:116px;font-size:10.5px;color:#444;font-weight:400;letter-spacing:-0.269px;">Format as</div>
<div class="t" style="left:676.60px;top:130px;font-size:10.5px;color:#444;font-weight:400;letter-spacing:-0.599px;">Table</div>
<div class="t" style="left:730.10px;top:116px;font-size:10.5px;color:#444;font-weight:400;letter-spacing:-0.504px;">Cell</div>
<div class="t" style="left:720.20px;top:130px;font-size:10.5px;color:#444;font-weight:400;letter-spacing:-0.563px;">Styles</div>
<div class="t" style="left:792.70px;top:86px;font-size:10.5px;color:#333;font-weight:400;letter-spacing:-0.150px;">Insert</div>
<div class="t" style="left:793.20px;top:106px;font-size:10.5px;color:#333;font-weight:400;letter-spacing:-0.349px;">Delete</div>
<div class="t" style="left:792.70px;top:126px;font-size:10.5px;color:#333;font-weight:400;letter-spacing:-0.007px;">Format</div>
<div class="t" style="left:896.40px;top:86px;font-size:12px;color:#2b7cd3;font-weight:400;letter-spacing:0.000px;">A</div>
<div class="t" style="left:896.40px;top:99px;font-size:12px;color:#444;font-weight:400;letter-spacing:0.000px;">Z</div>
<div class="t" style="left:893.70px;top:116px;font-size:10.5px;color:#444;font-weight:400;letter-spacing:0.202px;">Sort &amp;</div>
<div class="t" style="left:892.50px;top:130px;font-size:10.5px;color:#444;font-weight:400;letter-spacing:-0.222px;">Filter</div>
<div class="t" style="left:932.00px;top:116px;font-size:10.5px;color:#444;font-weight:400;letter-spacing:0.251px;">Find &amp;</div>
<div class="t" style="left:929.40px;top:130px;font-size:10.5px;color:#444;font-weight:400;letter-spacing:-0.478px;">Select</div>
<div class="t" style="left:14.10px;top:180px;font-size:10.8px;color:#333;font-weight:400;letter-spacing:0.970px;">A1</div>
<div class="t" style="left:201.5px;top:178.00px;font-size:12px;color:#555;font-weight:700;font-style:italic;font-family:'Liberation Serif'">f</div>
<div class="t" style="left:205.8px;top:182.00px;font-size:9px;color:#555;font-weight:700;font-style:italic;font-family:'Liberation Serif'">x</div>
<div class="t" style="left:-45.625px;width:200px;text-align:center;top:208.00px;font-size:11px;color:#217346;font-weight:400;">A</div>
<div class="t" style="left:11.125px;width:200px;text-align:center;top:208.00px;font-size:11px;color:#333;font-weight:400;">B</div>
<div class="t" style="left:67.875px;width:200px;text-align:center;top:208.00px;font-size:11px;color:#333;font-weight:400;">C</div>
<div class="t" style="left:124.625px;width:200px;text-align:center;top:208.00px;font-size:11px;color:#333;font-weight:400;">D</div>
<div class="t" style="left:181.375px;width:200px;text-align:center;top:208.00px;font-size:11px;color:#333;font-weight:400;">E</div>
<div class="t" style="left:238.125px;width:200px;text-align:center;top:208.00px;font-size:11px;color:#333;font-weight:400;">F</div>
<div class="t" style="left:294.875px;width:200px;text-align:center;top:208.00px;font-size:11px;color:#333;font-weight:400;">G</div>
<div class="t" style="left:351.625px;width:200px;text-align:center;top:208.00px;font-size:11px;color:#333;font-weight:400;">H</div>
<div class="t" style="left:408.375px;width:200px;text-align:center;top:208.00px;font-size:11px;color:#333;font-weight:400;">I</div>
<div class="t" style="left:465.125px;width:200px;text-align:center;top:208.00px;font-size:11px;color:#333;font-weight:400;">J</div>
<div class="t" style="left:521.875px;width:200px;text-align:center;top:208.00px;font-size:11px;color:#333;font-weight:400;">K</div>
<div class="t" style="left:578.625px;width:200px;text-align:center;top:208.00px;font-size:11px;color:#333;font-weight:400;">L</div>
<div class="t" style="left:635.375px;width:200px;text-align:center;top:208.00px;font-size:11px;color:#333;font-weight:400;">M</div>
<div class="t" style="left:692.125px;width:200px;text-align:center;top:208.00px;font-size:11px;color:#333;font-weight:400;">N</div>
<div class="t" style="left:748.875px;width:200px;text-align:center;top:208.00px;font-size:11px;color:#333;font-weight:400;">O</div>
<div class="t" style="left:805.625px;width:200px;text-align:center;top:208.00px;font-size:11px;color:#333;font-weight:400;">P</div>
<div class="t" style="left:862.375px;width:200px;text-align:center;top:208.00px;font-size:11px;color:#333;font-weight:400;">Q</div>
<div class="t" style="left:-85px;width:200px;text-align:center;top:227.00px;font-size:10.5px;color:#217346;font-weight:400;">1</div>
<div class="t" style="left:-85px;width:200px;text-align:center;top:245.00px;font-size:10.5px;color:#333;font-weight:400;">2</div>
<div class="t" style="left:-85px;width:200px;text-align:center;top:262.00px;font-size:10.5px;color:#333;font-weight:400;">3</div>
<div class="t" style="left:-85px;width:200px;text-align:center;top:280.00px;font-size:10.5px;color:#333;font-weight:400;">4</div>
<div class="t" style="left:-85px;width:200px;text-align:center;top:298.00px;font-size:10.5px;color:#333;font-weight:400;">5</div>
<div class="t" style="left:-85px;width:200px;text-align:center;top:316.00px;font-size:10.5px;color:#333;font-weight:400;">6</div>
<div class="t" style="left:-85px;width:200px;text-align:center;top:333.00px;font-size:10.5px;color:#333;font-weight:400;">7</div>
<div class="t" style="left:-85px;width:200px;text-align:center;top:351.00px;font-size:10.5px;color:#333;font-weight:400;">8</div>
<div class="t" style="left:-85px;width:200px;text-align:center;top:369.00px;font-size:10.5px;color:#333;font-weight:400;">9</div>
<div class="t" style="left:-85px;width:200px;text-align:center;top:386.00px;font-size:10.5px;color:#333;font-weight:400;">10</div>
<div class="t" style="left:-85px;width:200px;text-align:center;top:404.00px;font-size:10.5px;color:#333;font-weight:400;">11</div>
<div class="t" style="left:-85px;width:200px;text-align:center;top:422.00px;font-size:10.5px;color:#333;font-weight:400;">12</div>
<div class="t" style="left:-85px;width:200px;text-align:center;top:440.00px;font-size:10.5px;color:#333;font-weight:400;">13</div>
<div class="t" style="left:-85px;width:200px;text-align:center;top:457.00px;font-size:10.5px;color:#333;font-weight:400;">14</div>
<div class="t" style="left:-85px;width:200px;text-align:center;top:475.00px;font-size:10.5px;color:#333;font-weight:400;">15</div>
<div class="t" style="left:-85px;width:200px;text-align:center;top:493.00px;font-size:10.5px;color:#333;font-weight:400;">16</div>
<div class="t" style="left:-85px;width:200px;text-align:center;top:511.00px;font-size:10.5px;color:#333;font-weight:400;">17</div>
<div class="t" style="left:-85px;width:200px;text-align:center;top:528.00px;font-size:10.5px;color:#333;font-weight:400;">18</div>
<div class="t" style="left:-85px;width:200px;text-align:center;top:546.00px;font-size:10.5px;color:#333;font-weight:400;">19</div>
<div class="t" style="left:-85px;width:200px;text-align:center;top:564.00px;font-size:10.5px;color:#333;font-weight:400;">20</div>
<div class="t" style="left:-85px;width:200px;text-align:center;top:581.00px;font-size:10.5px;color:#333;font-weight:400;">21</div>
<div class="t" style="left:-85px;width:200px;text-align:center;top:599.00px;font-size:10.5px;color:#333;font-weight:400;">22</div>
<div class="t" style="left:-85px;width:200px;text-align:center;top:617.00px;font-size:10.5px;color:#333;font-weight:400;">23</div>
<div class="t" style="left:-85px;width:200px;text-align:center;top:635.00px;font-size:10.5px;color:#333;font-weight:400;">24</div>
<div class="t" style="left:103.90px;top:656px;font-size:11px;color:#444;font-weight:400;letter-spacing:-0.274px;">Sheet1</div>
<div class="t" style="left:161.50px;top:656px;font-size:11px;color:#444;font-weight:400;letter-spacing:-0.234px;">Sheet2</div>
<div class="t" style="left:218.20px;top:656px;font-size:11px;color:#217346;font-weight:700;letter-spacing:-0.096px;">Sheet3</div>
<div class="t" style="left:10.00px;top:679px;font-size:10px;color:#444;font-weight:400;letter-spacing:-0.500px;">Ready</div>
<div class="t" style="left:99.90px;top:679px;font-size:10px;color:#444;font-weight:400;letter-spacing:-0.028px;">Accessibility: Investigate</div>
<div class="t" style="left:981.20px;top:679px;font-size:10px;color:#444;font-weight:400;letter-spacing:-0.733px;">100%</div>
</body></html>
